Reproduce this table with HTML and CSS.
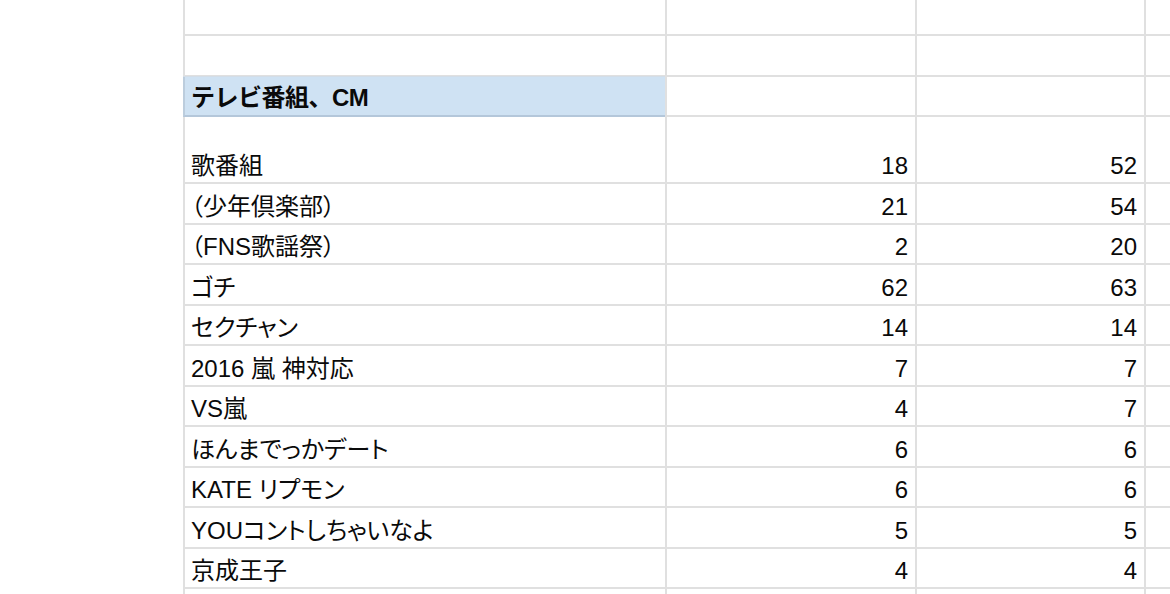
FILE: index.html
```html
<!DOCTYPE html>
<html lang="ja">
<head>
<meta charset="utf-8">
<title>テレビ番組、CM</title>
<link rel="stylesheet" href="styles.css">
</head>
<body>
<div class="sheet">
  <div class="row r-top"><div class="cell"></div><div class="cell"></div><div class="cell"></div><div class="cell"></div></div>
  <div class="row r-blank"><div class="cell"></div><div class="cell"></div><div class="cell"></div><div class="cell"></div></div>
  <div class="row r-head"><div class="cell head">テレビ番組、CM</div><div class="cell"></div><div class="cell"></div><div class="cell"></div></div>
  <div class="row r-tall"><div class="cell">歌番組</div><div class="cell num">18</div><div class="cell num">52</div><div class="cell"></div></div>
  <div class="row"><div class="cell">（少年倶楽部）</div><div class="cell num">21</div><div class="cell num">54</div><div class="cell"></div></div>
  <div class="row"><div class="cell">（FNS歌謡祭）</div><div class="cell num">2</div><div class="cell num">20</div><div class="cell"></div></div>
  <div class="row"><div class="cell">ゴチ</div><div class="cell num">62</div><div class="cell num">63</div><div class="cell"></div></div>
  <div class="row"><div class="cell">セクチャン</div><div class="cell num">14</div><div class="cell num">14</div><div class="cell"></div></div>
  <div class="row"><div class="cell">2016 嵐 神対応</div><div class="cell num">7</div><div class="cell num">7</div><div class="cell"></div></div>
  <div class="row"><div class="cell">VS嵐</div><div class="cell num">4</div><div class="cell num">7</div><div class="cell"></div></div>
  <div class="row"><div class="cell">ほんまでっかデート</div><div class="cell num">6</div><div class="cell num">6</div><div class="cell"></div></div>
  <div class="row"><div class="cell">KATE リプモン</div><div class="cell num">6</div><div class="cell num">6</div><div class="cell"></div></div>
  <div class="row"><div class="cell">YOUコントしちゃいなよ</div><div class="cell num">5</div><div class="cell num">5</div><div class="cell"></div></div>
  <div class="row"><div class="cell">京成王子</div><div class="cell num">4</div><div class="cell num">4</div><div class="cell"></div></div>
  <div class="row"><div class="cell"></div><div class="cell"></div><div class="cell"></div><div class="cell"></div></div>
</div>
</body>
</html>
```

FILE: styles.css
```css
html, body {
  margin: 0;
  padding: 0;
  background: #ffffff;
  overflow: hidden;
}

.sheet {
  margin-left: 183px;
  width: 987px;
  font-family: "Liberation Sans", "Noto Sans CJK JP", sans-serif;
  font-size: 24px;
  line-height: 28px;
  color: #0a0a0a;
  font-feature-settings: "palt";
}

.row {
  display: grid;
  grid-template-columns: 482px 250px 229px 1fr;
  height: 40.5px;
}

.r-top { height: 36px; }
.r-blank { height: 41px; }
.r-head { height: 40px; }
.r-tall { height: 67px; }

.cell {
  box-sizing: border-box;
  border-left: 2px solid #e0e0e0;
  border-bottom: 2px solid #e0e0e0;
  display: flex;
  align-items: flex-end;
  padding: 0 6px 2px 6px;
  white-space: nowrap;
  overflow: hidden;
}

.num {
  justify-content: flex-end;
  padding-right: 7px;
}

.head {
  background: #cfe2f3;
  font-weight: bold;
  font-feature-settings: normal;
  letter-spacing: -0.5px;
  border-left-color: #bccddd;
  border-bottom-color: #b4c7da;
  box-shadow: 0 -1px 0 #d3dde7;
  padding-bottom: 3px;
}
```
